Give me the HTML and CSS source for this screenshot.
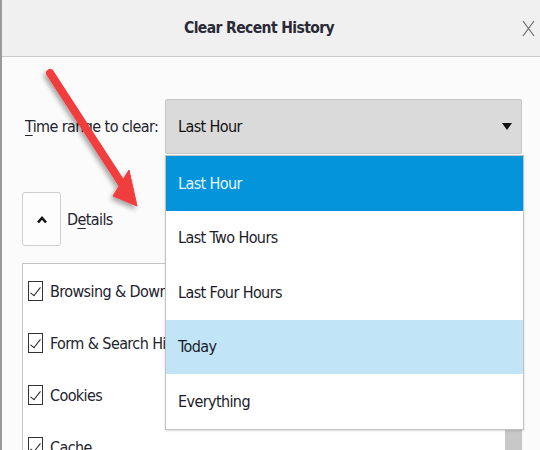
FILE: index.html
```html
<!DOCTYPE html>
<html lang="en">

<head>
    <meta charset="UTF-8">
    <meta name="viewport" content="width=device-width, initial-scale=1.0">
    <title>Clear Recent History</title>
    <link rel="stylesheet" href="styles.css">
</head>

<body>
    <div class="dialog">
        <header class="titlebar">
            <h1>Clear Recent History</h1>
            <button class="close" title="Close">
                <svg width="13" height="17" viewBox="0 0 13 17">
                    <path d="M1 1 L12 16 M12 1 L1 16" stroke="#6a6a6a" stroke-width="1.2" fill="none" />
                </svg>
            </button>
        </header>

        <main class="content">
            <div class="range-row">
                <label><u>T</u>ime range to clear:</label>
                <div class="select">
                    <span>Last Hour</span>
                    <span class="select-caret"></span>
                </div>
            </div>

            <div class="details-row">
                <button class="toggle">
                    <svg width="12" height="9" viewBox="0 0 12 9">
                        <path d="M2 7.5 L6 3 L10 7.5" stroke="#111" stroke-width="2.6" fill="none" />
                    </svg>
                </button>
                <span>D<u>e</u>tails</span>
            </div>

            <div class="items">
                <ul>
                    <li><span class="check"></span>Browsing &amp; Download History</li>
                    <li><span class="check"></span>Form &amp; Search History</li>
                    <li><span class="check"></span>Cookies</li>
                    <li><span class="check"></span>Cache</li>
                </ul>
                <div class="scrollbar">
                    <div class="thumb"></div>
                </div>
            </div>
        </main>

        <!-- open popup of the select -->
        <ul class="dropdown">
            <li class="selected">Last Hour</li>
            <li>Last Two Hours</li>
            <li>Last Four Hours</li>
            <li class="hover">Today</li>
            <li>Everything</li>
        </ul>

        <!-- red annotation arrow -->
        <svg class="arrow" width="160" height="220" viewBox="0 0 160 220">
            <defs>
                <filter id="shade" x="-20%" y="-20%" width="150%" height="150%">
                    <feDropShadow dx="-2" dy="3" stdDeviation="2.5" flood-color="#000" flood-opacity="0.35" />
                </filter>
            </defs>
            <g filter="url(#shade)" fill="#f03c3c" stroke="#f03c3c">
                <line x1="50" y1="73" x2="122" y2="184" stroke-width="8" stroke-linecap="round" />
                <polygon points="137,206 113,196 129,170" stroke-width="1" stroke-linejoin="round" />
            </g>
        </svg>
    </div>
</body>

</html>
```

FILE: styles.css
```css
* {
    margin: 0;
    padding: 0;
    box-sizing: border-box;
}

body {
    width: 540px;
    height: 450px;
    overflow: hidden;
    font-family: "DejaVu Sans Condensed", "DejaVu Sans", sans-serif;
    font-size: 16px;
    letter-spacing: -0.6px;
    color: #23232e;
}

u {
    text-decoration-thickness: 1px;
    text-underline-offset: 3px;
}

.dialog {
    position: relative;
    width: 540px;
    height: 450px;
    overflow: hidden;
    display: flex;
    flex-direction: column;
    background-color: #fbfbfb;
    border-left: 2px solid #9a9a9a;
}

.titlebar {
    height: 57px;
    flex-shrink: 0;
    display: flex;
    align-items: center;
    background-color: #f0f0f0;
    border-bottom: 1px solid #c9c9c9;
}

.titlebar h1 {
    flex: 1;
    text-align: center;
    font-size: 15.5px;
    font-weight: bold;
    color: #2a2a36;
}

.close {
    width: 24px;
    height: 24px;
    display: flex;
    align-items: center;
    justify-content: center;
    border: none;
    background: none;
}

.content {
    flex: 1;
    display: flex;
    flex-direction: column;
    padding: 42px 18px 0 20px;
}

.range-row {
    display: flex;
    align-items: center;
}

.range-row label {
    padding-left: 3px;
    white-space: nowrap;
}

.select {
    margin-left: auto;
    flex-shrink: 0;
    width: 357px;
    height: 55px;
    display: flex;
    align-items: center;
    justify-content: space-between;
    padding: 0 9px 0 12px;
    background-color: #dadada;
    border: 1px solid #c6c6c6;
    border-radius: 2px;
    color: #111;
}

.select-caret {
    width: 0;
    height: 0;
    border-left: 5px solid transparent;
    border-right: 5px solid transparent;
    border-top: 7px solid #111;
}

.details-row {
    display: flex;
    align-items: center;
    gap: 6px;
    margin-top: 38px;
}

.toggle {
    width: 39px;
    height: 54px;
    display: flex;
    align-items: center;
    justify-content: center;
    background-color: #fdfdfd;
    border: 1px solid #cfcfcf;
    border-radius: 3px;
}

.items {
    flex: 1;
    min-height: 0;
    display: flex;
    margin-top: 17px;
    background-color: #fff;
    border: 1px solid #c4c4c4;
    border-bottom: none;
}

.items ul {
    flex: 1;
    list-style: none;
    padding: 1px 0 0 5px;
}

.items li {
    height: 52px;
    display: flex;
    align-items: center;
    gap: 7px;
    white-space: nowrap;
}

.check {
    position: relative;
    width: 15px;
    height: 20px;
    border: 1.5px solid #333;
}

.check::after {
    content: '';
    position: absolute;
    left: 4px;
    top: 3px;
    width: 4px;
    height: 10px;
    border-right: 1.5px solid #222;
    border-bottom: 1.5px solid #222;
    transform: rotate(38deg);
}

.scrollbar {
    width: 16px;
}

.thumb {
    height: 100%;
    background-color: #c8c8c8;
}

.dropdown {
    position: absolute;
    left: 163px;
    top: 155px;
    width: 359px;
    list-style: none;
    background-color: #fff;
    border: 1px solid #c2c2c2;
    box-shadow: 0 1px 2px rgba(0, 0, 0, 0.15);
    color: #1c1c28;
}

.dropdown li {
    height: 54.5px;
    display: flex;
    align-items: center;
    padding-left: 12px;
}

.dropdown .selected {
    background-color: #0494dc;
    color: #e6f3fb;
}

.dropdown .hover {
    background-color: #c1e4f6;
}

.arrow {
    position: absolute;
    left: -2px;
    top: 0;
}
```
